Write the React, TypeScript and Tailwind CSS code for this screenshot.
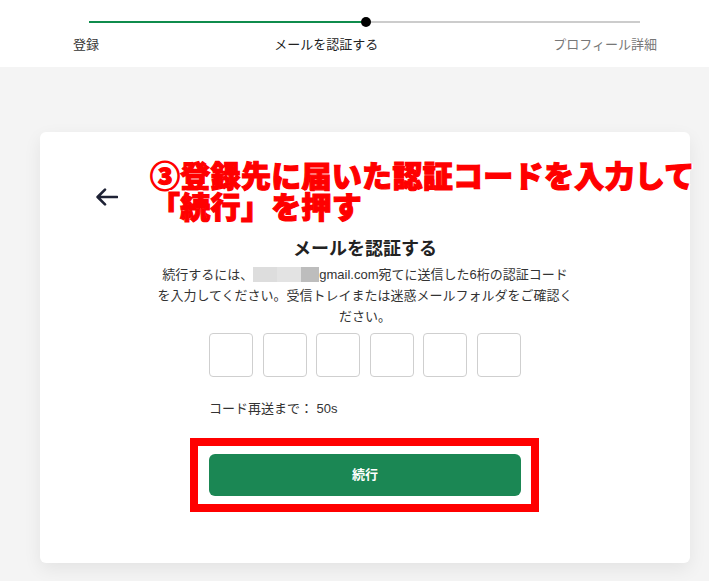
import React from "react";

export default function App() {
  const boxes = [0, 1, 2, 3, 4, 5];
  return (
    <div className="h-[581px] overflow-hidden bg-[#f4f4f4] font-['Liberation_Sans','Noto_Sans_CJK_JP',sans-serif] text-[#333333]">
      {/* Stepper header */}
      <div className="h-[67px] bg-white">
        <div className="pl-[89px] pt-[21px]">
          <div className="relative h-[2px] w-[551px] bg-[#cccccc]">
            <div className="absolute left-0 top-0 h-[2px] w-[277px] bg-[#0f8c4c]" />
            <div className="absolute left-[272px] top-[-4px] h-[10px] w-[10px] rounded-full bg-black" />
          </div>
        </div>
        <div className="ml-[73px] mt-[12px] flex w-[584px] justify-between text-[13px] leading-[20px]">
          <span className="text-[#333333]">登録</span>
          <span className="text-[#222222]">メールを認証する</span>
          <span className="text-[#777777]">プロフィール詳細</span>
        </div>
      </div>

      {/* Card */}
      <div className="relative ml-[40px] mt-[65px] h-[431px] w-[650px] rounded-[6px] bg-white shadow-[0_6px_18px_rgba(0,0,0,0.07)]">
        <div className="pl-[56px] pt-[56px]">
          <svg width="22" height="18" viewBox="0 0 22 18" fill="none">
            <path
              d="M21 9H1.8M9 1.6L1.6 9L9 16.4"
              stroke="#1e2235"
              strokeWidth="2.6"
              strokeLinecap="round"
              strokeLinejoin="round"
            />
          </svg>
        </div>

        <h1 className="mt-[30px] text-center text-[18px] font-bold leading-[26px] text-[#222222]">
          メールを認証する
        </h1>
        <p className="mx-auto mt-[2px] w-[460px] text-center text-[13px] leading-[21px] text-[#333333]">
          続行するには、
          <span className="inline-flex h-[15px] w-[66px] align-[-3px]">
            <span className="h-full w-[24px] bg-[#dddddd]" />
            <span className="h-full w-[24px] bg-[#e3e3e3]" />
            <span className="h-full w-[18px] bg-[#bdbdbd]" />
          </span>
          gmail.com宛てに送信した6桁の認証コード
          <br />
          を入力してください。受信トレイまたは迷惑メールフォルダをご確認く
          <br />
          ださい。
        </p>

        <div className="mx-auto w-[312px]">
          <div className="mt-[6px] flex gap-[9.6px]">
            {boxes.map((b) => (
              <div
                key={b}
                className="h-[44px] flex-1 rounded-[4px] border border-[#cfcfcf] bg-white"
              />
            ))}
          </div>
          <div className="mt-[22px] text-[13px] leading-[20px] text-[#333333]">
            コード再送まで： 50s
          </div>
          <div className="relative mt-[35px]">
            <button className="h-[42px] w-full rounded-[6px] bg-[#1b8754] text-[13px] font-bold text-white">
              続行
            </button>
            <div className="pointer-events-none absolute -bottom-[16px] -left-[19px] -right-[18px] -top-[16px] border-[8px] border-[#ff0000]" />
          </div>
        </div>

        {/* Annotation overlay */}
        <div className="pointer-events-none absolute left-[110px] top-[27px] whitespace-nowrap font-['Noto_Sans_CJK_JP',sans-serif] text-[30px] font-black leading-[31px] tracking-[0.3px] text-[#ff0000] [-webkit-text-stroke:1.2px_#ff0000] [text-shadow:1px_1px_0_#fff,-1px_-1px_0_#fff,1px_-1px_0_#fff,-1px_1px_0_#fff,0_2px_0_#fff,2px_0_0_#fff,0_-2px_0_#fff,-2px_0_0_#fff]">
          ③登録先に届いた認証コードを入力して
          <br />
          「続行」を押す
        </div>
      </div>
    </div>
  );
}
